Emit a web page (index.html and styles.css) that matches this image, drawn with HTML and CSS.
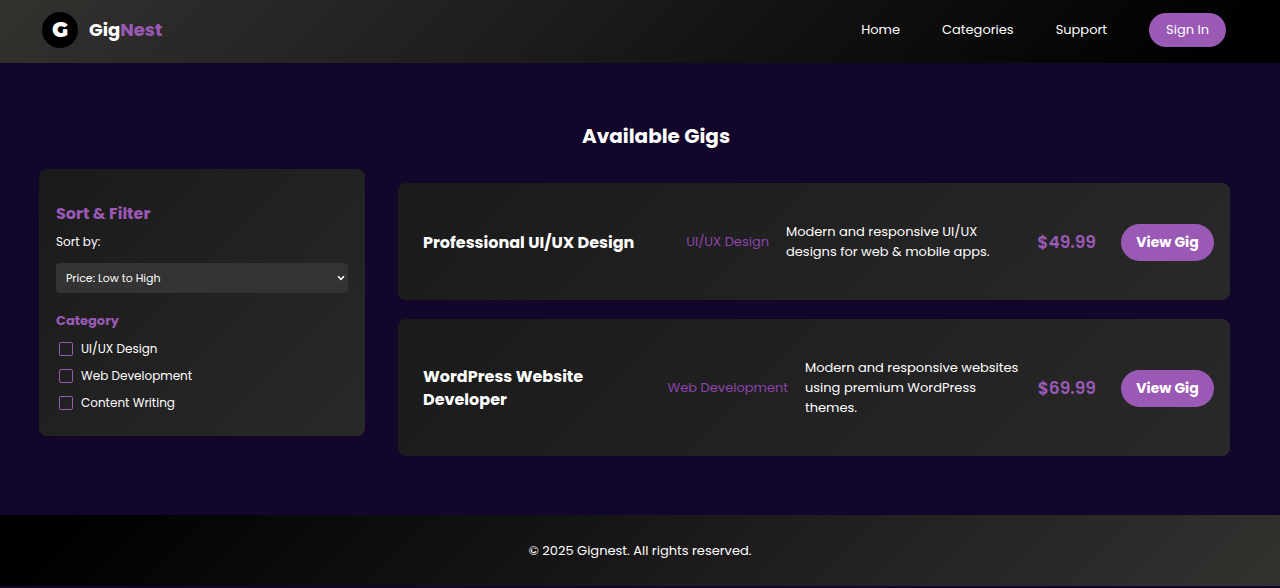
FILE: index.html
```html
<!DOCTYPE html>
<html lang="en">
<head>
<meta charset="utf-8">
<title>GigNest</title>
<meta name="viewport" content="width=device-width, initial-scale=1">
<link rel="stylesheet" href="styles.css">
</head>
<body>
<header class="header">
  <a class="brand" href="#"><span class="brand-mark">G</span><span class="brand-name">Gig<span class="accent">Nest</span></span></a>
  <nav class="nav">
    <a href="#">Home</a>
    <a href="#">Categories</a>
    <a href="#">Support</a>
    <button class="sign-in" type="button">Sign In</button>
  </nav>
</header>
<main class="main">
  <h1 class="page-title">Available Gigs</h1>
  <div class="content">
    <aside class="filters">
      <h2 class="filters-title">Sort &amp; Filter</h2>
      <label class="sort-label" for="sort">Sort by:</label>
      <div class="select-wrap">
        <select class="sort-select" id="sort">
          <option>Price: Low to High</option>
          <option>Price: High to Low</option>
        </select>
        <svg class="chevron" viewBox="0 0 8 6" aria-hidden="true"><path d="M1 1.2 4 4.3 7 1.2" fill="none" stroke="#fff" stroke-width="1.6"/></svg>
      </div>
      <h3 class="category-title">Category</h3>
      <label class="check"><input type="checkbox">UI/UX Design</label>
      <label class="check"><input type="checkbox">Web Development</label>
      <label class="check"><input type="checkbox">Content Writing</label>
    </aside>
    <section class="gigs">
      <article class="gig">
        <h2 class="gig-title">Professional UI/UX Design</h2>
        <span class="gig-category">UI/UX Design</span>
        <p class="gig-text gig-text-wide">Modern and responsive UI/UX designs for web &amp; mobile apps.</p>
        <span class="gig-price">$49.99</span>
        <button class="gig-button" type="button">View Gig</button>
      </article>
      <article class="gig">
        <h2 class="gig-title">WordPress Website Developer</h2>
        <span class="gig-category">Web Development</span>
        <p class="gig-text">Modern and responsive websites using premium WordPress themes.</p>
        <span class="gig-price">$69.99</span>
        <button class="gig-button" type="button">View Gig</button>
      </article>
    </section>
  </div>
</main>
<footer class="footer">© 2025 Gignest. All rights reserved.</footer>
</body>
</html>
```
FILE: styles.css
```css
* { box-sizing: border-box; }
body {
  margin: 0;
  background: #12062a;
  color: #fff;
  font: 13px/20px Poppins, Inter, sans-serif;
}
h1, h2, h3, p { margin: 0; }
button, select { font-family: inherit; color: #fff; border: 0; }
a { color: inherit; text-decoration: none; }
.accent { color: #9b59b6; }

.header {
  display: flex;
  justify-content: space-between;
  align-items: center;
  padding: 12px 54px 15px 42px;
  background: linear-gradient(135deg, #33322f, #232021 33%, #0f0f0f 66%, #000 95%);
}
.brand { display: flex; align-items: center; gap: 11px; }
.brand-mark {
  display: grid;
  place-items: center;
  width: 36px;
  height: 36px;
  border-radius: 50%;
  background: #000;
  font-family: Montserrat, Inter, sans-serif;
  font-size: 21px;
  font-weight: 900;
}
.brand-name { font-size: 18px; font-weight: 700; }
.nav { display: flex; align-items: center; gap: 42px; font-size: 13px; }
.sign-in {
  height: 34px;
  padding: 0 17px;
  border-radius: 17px;
  background: #9b59b6;
  font-size: 13px;
}

.main { padding: 58px 50px 59px 39px; }
.page-title {
  padding-left: 43px;
  font-size: 20px;
  line-height: 30px;
  text-align: center;
}
.content {
  display: grid;
  grid-template-columns: 326px 1fr;
  gap: 33px;
  align-items: start;
  padding-top: 18px;
}
.filters {
  display: flex;
  flex-direction: column;
  padding: 33px 17px 20px;
  border-radius: 8px;
  background: linear-gradient(135deg, #1a1a1a, #292929);
  font-size: 12px;
}
.filters-title { color: #9b59b6; font-size: 16px; line-height: 24px; }
.sort-label { margin: 6px 0 11px; }
.select-wrap { position: relative; margin-bottom: 16px; }
.sort-select {
  appearance: none;
  display: block;
  width: 100%;
  height: 30px;
  padding: 0 10px;
  border-radius: 4px;
  background: #333;
  font-size: 11px;
}
.chevron {
  position: absolute;
  top: 12px;
  right: 3px;
  width: 8px;
  height: 6px;
  pointer-events: none;
}
.category-title { margin-bottom: 2px; color: #9b59b6; font-size: 13px; line-height: 24px; }
.check { display: flex; align-items: center; gap: 8px; height: 27px; }
.check input {
  appearance: none;
  width: 14px;
  height: 14px;
  margin: 0 0 0 3px;
  border: 1px solid #9b59b6;
  border-radius: 2px;
}

.gigs { display: grid; gap: 19px; padding-top: 14px; }
.gig {
  display: flex;
  align-items: center;
  min-height: 117px;
  padding: 39px 16px 38px 25px;
  border-radius: 8px;
  background: linear-gradient(135deg, #1a1a1a, #292929);
}
.gig-title { max-width: 214px; font-size: 16px; line-height: 23px; }
.gig-category { margin: 0 17px 0 auto; color: #8e44ad; font-size: 13px; white-space: nowrap; }
.gig-text { width: 220px; font-size: 13px; }
.gig-text-wide { width: 239px; }
.gig-price {
  width: 71px;
  color: #9b59b6;
  font-size: 17px;
  font-weight: 600;
  text-align: right;
}
.gig-button {
  flex: none;
  width: 93px;
  height: 37px;
  margin-left: 25px;
  border-radius: 19px;
  background: #9b59b6;
  font-size: 14px;
  font-weight: 700;
}

.footer {
  padding: 26px 0 25px;
  margin-bottom: 2px;
  background: linear-gradient(135deg, #000 5%, #0f0f0f 33%, #232021 66%, #33322f);
  text-align: center;
}
```
